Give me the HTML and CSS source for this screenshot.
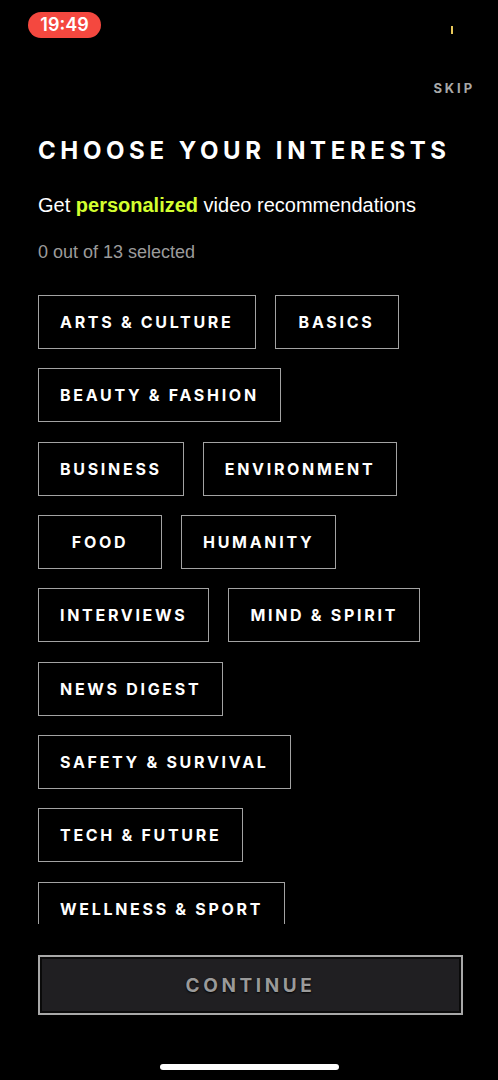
FILE: index.html
```html
<!DOCTYPE html>
<html>
<head>
    <title>Choose your interests</title>
    <link rel="stylesheet" href="styles.css">
</head>
<body>
    <div class="screen">
        <div class="status">
            <span class="clock">19:49</span>
            <span class="signal"></span>
        </div>

        <div class="topbar">
            <a class="skip">SKIP</a>
        </div>

        <h1 class="title">CHOOSE YOUR INTERESTS</h1>
        <p class="sub">Get <b>personalized</b> video recommendations</p>
        <p class="count">0 out of 13 selected</p>

        <div class="chips">
            <button class="chip">ARTS &amp; CULTURE</button>
            <button class="chip">BASICS</button>
            <button class="chip">BEAUTY &amp; FASHION</button>
            <button class="chip">BUSINESS</button>
            <button class="chip">ENVIRONMENT</button>
            <button class="chip">FOOD</button>
            <button class="chip">HUMANITY</button>
            <button class="chip">INTERVIEWS</button>
            <button class="chip">MIND &amp; SPIRIT</button>
            <button class="chip">NEWS DIGEST</button>
            <button class="chip">SAFETY &amp; SURVIVAL</button>
            <button class="chip">TECH &amp; FUTURE</button>
            <button class="chip">WELLNESS &amp; SPORT</button>
        </div>

        <div class="footer">
            <button class="continue">CONTINUE</button>
        </div>

        <div class="home"></div>
    </div>
</body>
</html>
```

FILE: styles.css
```css
    html, body {
        margin: 0;
        padding: 0;
        background-color: #000;
    }
    .screen {
        width: 498px;
        height: 1080px;
        display: flex;
        flex-direction: column;
        font-family: Inter, "Liberation Sans", sans-serif;
        color: white;
        overflow: hidden;
    }

    /* status bar */
    .status {
        height: 50px;
        display: flex;
        align-items: flex-start;
        justify-content: space-between;
        padding: 12px 0 0 28px;
        box-sizing: border-box;
    }
    .clock {
        background-color: #f4483f;
        color: white;
        font-family: Inter, sans-serif;
        font-weight: 600;
        font-size: 18px;
        line-height: 26px;
        width: 73px;
        text-align: center;
        border-radius: 13px;
    }
    .signal {
        width: 2px;
        height: 8px;
        margin: 14px 45px 0 0;
        background-color: #e9c85a;
    }

    .topbar {
        display: flex;
        justify-content: flex-end;
        padding: 30px 23px 0 0;
    }
    .skip {
        color: #a9a9a9;
        font-size: 13px;
        font-weight: 700;
        letter-spacing: 2.9px;
    }

    .title {
        margin: 40px 0 0 38px;
        font-size: 24px;
        font-weight: 700;
        letter-spacing: 4.6px;
        line-height: 30px;
    }
    .sub {
        margin: 28px 0 0 38px;
        font-family: "Liberation Sans", sans-serif;
        font-size: 20px;
        line-height: 22px;
    }
    .sub b {
        color: #d4ff2f;
    }
    .count {
        margin: 26px 0 0 38px;
        font-family: "Liberation Sans", sans-serif;
        font-size: 18px;
        line-height: 20px;
        color: #9b9b9b;
    }

    /* topic chips */
    .chips {
        margin: 33px 0 0 38px;
        width: 395px;
        height: 629px;
        overflow: hidden;
        display: flex;
        flex-wrap: wrap;
        align-content: flex-start;
        gap: 19.33px 19px;
    }
    .chip {
        height: 54px;
        min-width: 124px;
        padding: 0 21px;
        background-color: #000;
        border: 1.5px solid #a3a3a3;
        color: white;
        font-family: Inter, sans-serif;
        font-size: 16px;
        font-weight: 700;
        letter-spacing: 2.7px;
    }

    .footer {
        padding: 31px 35px 0 38px;
    }
    .continue {
        width: 100%;
        height: 60px;
        background-color: #201f22;
        border: 2px solid #a8a8a8;
        box-shadow: inset 0 0 0 2px #0a0a0a;
        color: #9a9a9a;
        font-family: Inter, sans-serif;
        font-size: 19px;
        font-weight: 700;
        letter-spacing: 3.6px;
        text-shadow: 0 1px 2px #000;
    }

    .home {
        width: 179px;
        height: 6px;
        border-radius: 3px;
        background-color: white;
        margin: 49px auto 0 auto;
    }
```
